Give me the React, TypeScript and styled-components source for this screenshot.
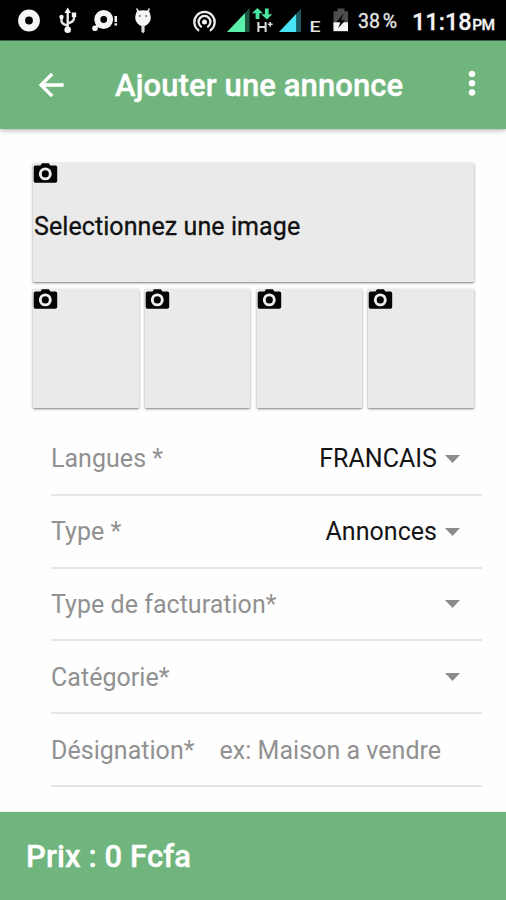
import React from "react";
import styled, { createGlobalStyle } from "styled-components";

const GlobalStyle = createGlobalStyle`
  * { box-sizing: border-box; }
  body { margin: 0; background: #fefefe; font-family: Roboto, "Liberation Sans", sans-serif; }
`;

const GREEN = "#70b57d";

const Screen = styled.div`
  width: 506px;
  height: 900px;
  display: flex;
  flex-direction: column;
  overflow: hidden;
  background: #fefefe;
`;

const StatusBar = styled.div`
  flex: none;
  height: 41px;
  display: flex;
  align-items: flex-start;
  background: #000;
  border-bottom: 1px solid #41684a;
  color: #f4f4f4;
`;

const StatusIcons = styled.svg`
  flex: none;
  display: block;
  width: 350px;
  height: 40px;
`;

const GlyphText = styled.text`
  font-family: Roboto, sans-serif;
  font-weight: 500;
  fill: #e4e4e4;
`;

const BatteryLevel = styled.span`
  margin-left: 8px;
  width: 54px;
  white-space: nowrap;
  font-size: 19.5px;
  line-height: 40px;
  padding-top: 2px;
  word-spacing: -2px;
  color: #e6e6e6;
  -webkit-text-stroke: 0.3px #e6e6e6;
`;

const Clock = styled.span`
  white-space: nowrap;
  font-size: 23.5px;
  font-weight: 500;
  line-height: 40px;
  padding-top: 2px;
  -webkit-text-stroke: 0.3px #f4f4f4;
`;

const Meridiem = styled.span`
  font-size: 15.5px;
  letter-spacing: -0.5px;
  margin-left: 0.5px;
`;

const AppBar = styled.header`
  flex: none;
  height: 88px;
  display: flex;
  align-items: center;
  background: ${GREEN};
  color: #fff;
  box-shadow: 0 1px 5px rgba(40, 40, 60, 0.42);
`;

const IconButton = styled.button`
  border: 0;
  padding: 0;
  background: none;
  display: flex;
  color: inherit;
`;

const BackButton = styled(IconButton)`
  margin-left: 33px;
`;

const MenuButton = styled(IconButton)`
  margin: -4px 16px 0 auto;
`;

const Title = styled.h1`
  margin: 1px 0 0 46px;
  white-space: nowrap;
  font-size: 31px;
  font-weight: 500;
  line-height: 40px;
  letter-spacing: 0.1px;
  -webkit-text-stroke: 0.4px #fff;
`;

const Content = styled.main`
  flex: 1;
  min-height: 0;
  padding: 34px 25px 0 33px;
`;

const Gallery = styled.section`
  width: 441px;
  display: grid;
  grid-template-columns: repeat(4, 105.5px);
  justify-content: space-between;
  row-gap: 7px;
`;

const Tile = styled.button<{ $wide?: boolean }>`
  grid-column: ${(p) => (p.$wide ? "1 / -1" : "auto")};
  height: 119px;
  padding: 0 0 0 1px;
  border: 0;
  border-radius: 1px;
  background: #eaeaea;
  box-shadow: 0 1px 3px rgba(0, 0, 0, 0.38), 0 1px 1px rgba(0, 0, 0, 0.18);
  display: flex;
  flex-direction: column;
  align-items: flex-start;
  text-align: left;
  font-family: inherit;
`;

const TileLabel = styled.span`
  margin-top: 27px;
  white-space: nowrap;
  font-size: 25px;
  line-height: 32px;
  letter-spacing: 0.08px;
  color: #111;
  -webkit-text-stroke: 0.3px #111;
`;

const Form = styled.section`
  margin: 15px 0 0 18px;
  width: 431px;
`;

const Field = styled.div`
  height: 72.8px;
  padding: 1px 22px 0 0;
  display: flex;
  align-items: center;
  border-bottom: 2px solid #e6e6e6;
  font-size: 25px;
  white-space: nowrap;
  letter-spacing: 0.03px;
`;

const FieldLabel = styled.label`
  color: #919191;
`;

const FieldValue = styled.span`
  margin-left: auto;
  color: #141414;
`;

const Placeholder = styled.span`
  margin-left: 25px;
  color: #919191;
`;

const Caret = styled.svg`
  flex: none;
  display: block;
  width: 15px;
  height: 8px;
  margin-left: 8px;
  fill: #8b8b8b;
`;

const PriceBar = styled.footer`
  flex: none;
  height: 88px;
  padding: 1px 26px 0;
  display: flex;
  align-items: center;
  background: ${GREEN};
  box-shadow: 0 0 1px ${GREEN};
  color: #fff;
  font-size: 31px;
  font-weight: 500;
  white-space: nowrap;
  letter-spacing: 0.1px;
  -webkit-text-stroke: 0.4px #fff;
`;

const CameraIcon = () => (
  <svg width="25" height="21" viewBox="0.6 0.9 25 21" overflow="visible">
    <path
      d="M2.2 3.5H7L8.6 1.2H15.4L17 3.5H22Q23.8 3.5 23.8 5.2V18.8Q23.8 20.6 22 20.6H2Q.3 20.6 .3 18.8V5.2Q.3 3.5 2.2 3.5Z"
      fill="#050505"
    />
    <circle cx="11.9" cy="11.8" r="5" fill="none" stroke="#eee" strokeWidth="2.9" />
  </svg>
);

const BackIcon = () => (
  <svg width="36" height="36" viewBox="0 0 24 24">
    <path
      fill="currentColor"
      stroke="currentColor"
      strokeWidth="0.4"
      d="M20.2 11H7.83l5.59-5.59L12 4l-8 8 8 8 1.41-1.41L7.83 13H20.2v-2z"
    />
  </svg>
);

const MoreIcon = () => (
  <svg width="36" height="36" viewBox="0 0 36 36" fill="currentColor">
    <circle cx="18" cy="8.9" r="3.2" />
    <circle cx="18" cy="18.2" r="3.2" />
    <circle cx="18" cy="27.5" r="3.2" />
  </svg>
);

const SystemIcons = () => (
  <StatusIcons viewBox="0 0 350 40" fill="#f5f5f5">
    <circle cx="29" cy="20.5" r="7.4" fill="none" stroke="#f5f5f5" strokeWidth="7" />

    <g fill="none" stroke="#e8e8e8" strokeWidth="2.4">
      <path d="M67.7 11V29M67.7 25.5Q61.5 24 61.5 21V18M67.7 23.5Q74 22 74 18V15" />
    </g>
    <path d="M67.7 7.5L71 13H64.4Z" />
    <circle cx="61.5" cy="17" r="2.2" />
    <rect x="71.8" y="12.5" width="4.4" height="4.6" />
    <circle cx="67.7" cy="29.8" r="3.3" />

    <circle cx="103.7" cy="19.5" r="6.4" fill="none" stroke="#f5f5f5" strokeWidth="6" />
    <circle cx="95" cy="28.3" r="2.8" />
    <path d="M94 28L98 22L101 27Z" />
    <path d="M114.5 16H117V22H114.5ZM114.5 23.2H117V25.4H114.5Z" />

    <path d="M136.5 8.5L139 12.5M149.5 8.5L147 12.5" stroke="#ddd" strokeWidth="1.5" />
    <path d="M137 11Q143 9.6 149 11Q152.4 18 149.5 22Q147 26 143 26.3Q139 26 136.5 22Q133.6 18 137 11Z" />
    <circle cx="139.8" cy="16" r="1.1" fill="#777" />
    <circle cx="146.2" cy="16" r="1.1" fill="#777" />
    <path d="M141.4 25H144.6V31.5L143 33.5L141.4 31.5Z" fill="#ddd" />

    <g fill="none" stroke="#ececec" strokeWidth="2.3" strokeLinecap="round">
      <path d="M198.3 30.2A10.2 10.2 0 1 1 210.7 30.2" />
      <path d="M201 26.6A5.9 5.9 0 1 1 208 26.6" />
    </g>
    <circle cx="204.5" cy="22" r="2.5" />

    <path d="M227 32L245 13V32Z" fill="#5cf0ad" />
    <path d="M245 13L249.5 8V32H245Z" fill="#1e5540" />

    <path d="M257.4 8L263 13.2H259.4V19H255.6V13.2H252Z" fill="#4be3a0" />
    <path d="M266.8 19.6L272.3 14.2H268.7V8.6H264.9V14.2H261.3Z" fill="#4be3a0" />
    <path d="M258.4 22V32M265.6 22V32M258.4 27H265.6" stroke="#ddd" strokeWidth="2" />
    <path d="M267.8 24.3H272.6M270.2 22V26.7" stroke="#ddd" strokeWidth="1.5" />

    <path d="M279 32L296.5 13.5V32Z" fill="#48e4f5" />
    <path d="M296.5 13.5L301 9V32H296.5Z" fill="#1c5960" />

    <GlyphText x="309.5" y="32" fontSize="14.5" textLength="11" lengthAdjust="spacingAndGlyphs">E</GlyphText>

    <path d="M337.5 8.5H344.5V11.2H348V31H333.5V11.2H337.5Z" fill="#4d4d4d" />
    <path d="M333.5 22.3H348V31.2H333.5Z" fill="#f7f7f7" />
    <path d="M343.8 13.5L336.3 21.8L340.4 22.6L338 28.2L345.2 20.6L341.2 19.6Z" fill="#0b0b0b" />
  </StatusIcons>
);

const CaretDown = () => (
  <Caret viewBox="0 0 15 8">
    <path d="M0 0H15L7.5 8Z" />
  </Caret>
);

const selects = [
  { label: "Langues *", value: "FRANCAIS" },
  { label: "Type *", value: "Annonces" },
  { label: "Type de facturation*", value: "" },
  { label: "Catégorie*", value: "" },
];

export default function App() {
  return (
    <Screen>
      <GlobalStyle />
      <StatusBar>
        <SystemIcons />
        <BatteryLevel>38 %</BatteryLevel>
        <Clock>
          11:18<Meridiem>PM</Meridiem>
        </Clock>
      </StatusBar>
      <AppBar>
        <BackButton aria-label="Retour">
          <BackIcon />
        </BackButton>
        <Title>Ajouter une annonce</Title>
        <MenuButton aria-label="Menu">
          <MoreIcon />
        </MenuButton>
      </AppBar>
      <Content>
        <Gallery>
          <Tile $wide>
            <CameraIcon />
            <TileLabel>Selectionnez une image</TileLabel>
          </Tile>
          {[0, 1, 2, 3].map((slot) => (
            <Tile key={slot}>
              <CameraIcon />
            </Tile>
          ))}
        </Gallery>
        <Form>
          {selects.map(({ label, value }) => (
            <Field key={label}>
              <FieldLabel>{label}</FieldLabel>
              <FieldValue>{value}</FieldValue>
              <CaretDown />
            </Field>
          ))}
          <Field>
            <FieldLabel>Désignation*</FieldLabel>
            <Placeholder>ex: Maison a vendre</Placeholder>
          </Field>
        </Form>
      </Content>
      <PriceBar>Prix : 0 Fcfa</PriceBar>
    </Screen>
  );
}
